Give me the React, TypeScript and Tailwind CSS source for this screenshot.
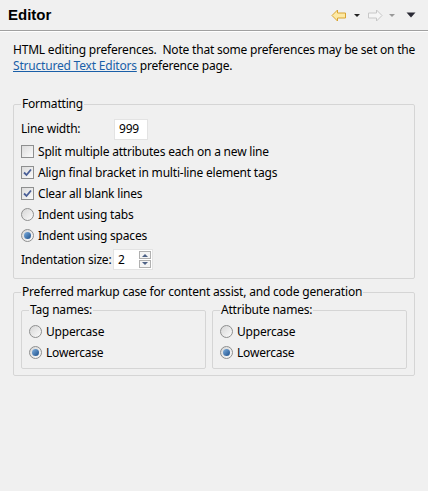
import React from 'react';

const font = { fontFamily: '"Noto Sans", "Liberation Sans", sans-serif' };

const Check = ({ checked }: { checked?: boolean }) => (
  <span className="relative flex h-[13px] w-[13px] shrink-0 items-center justify-center border border-[#8e8f8f] bg-gradient-to-br from-[#dcdcdc] to-[#fbfbfb]">
    {checked && (
      <svg width="9" height="9" viewBox="0 0 9 9">
        <path d="M1 4.5 L3.5 7 L8 1.5" fill="none" stroke="#4a5f97" strokeWidth="1.8" />
      </svg>
    )}
  </span>
);

const Radio = ({ checked }: { checked?: boolean }) => (
  <span className="flex h-[13px] w-[13px] shrink-0 items-center justify-center rounded-full border border-[#8e8f8f] bg-gradient-to-br from-[#d6d6d6] to-[#fbfbfb]">
    {checked && <span className="h-[7px] w-[7px] rounded-full bg-gradient-to-br from-[#7fb0e0] to-[#1b4f8a]" />}
  </span>
);

const Row = ({ children, label }: { children: React.ReactNode; label: string }) => (
  <div className="flex h-[21px] items-center gap-[4px] whitespace-nowrap">
    {children}
    <span>{label}</span>
  </div>
);

const Group = ({ legend, className, children }: { legend: string; className?: string; children: React.ReactNode }) => (
  <fieldset className={`rounded-[2px] border border-[#d5d5d5] ${className ?? ''}`}>
    <legend className="px-[1px] leading-[16px] whitespace-nowrap">{legend}</legend>
    {children}
  </fieldset>
);

export default function App() {
  return (
    <div className="h-[491px] w-[428px] bg-[#f0f0f0] text-[12px] tracking-[-0.2px] text-black" style={font}>
      {/* Title bar */}
      <div className="flex h-[31px] items-center justify-between border-b border-[#a0a0a0] pl-[8px] pr-[12px]">
        <span className="text-[15px] font-bold tracking-normal" style={{ fontFamily: '"Liberation Sans", Arial, sans-serif' }}>Editor</span>
        <div className="flex items-center">
          <svg width="16" height="13" viewBox="0 0 16 13">
            <path d="M1 6.5 L6.5 1 L6.5 4 L14.5 4 L14.5 9 L6.5 9 L6.5 12 Z" fill="#fde9a4" stroke="#d9a430" strokeWidth="1" />
          </svg>
          <svg width="8" height="5" viewBox="0 0 8 5" className="ml-[6px]">
            <path d="M1 1 L7 1 L4 4 Z" fill="#222" />
          </svg>
          <svg width="16" height="13" viewBox="0 0 16 13" className="ml-[6px]">
            <path d="M15 6.5 L9.5 1 L9.5 4 L1.5 4 L1.5 9 L9.5 9 L9.5 12 Z" fill="#f5f5f5" stroke="#c8c8c8" strokeWidth="1" />
          </svg>
          <svg width="8" height="5" viewBox="0 0 8 5" className="ml-[5px]">
            <path d="M1 1 L7 1 L4 4 Z" fill="#999" />
          </svg>
          <svg width="10" height="6" viewBox="0 0 10 6" className="ml-[10px]">
            <path d="M0.5 0.5 L9.5 0.5 L5 5.5 Z" fill="#2a2a35" />
          </svg>
        </div>
      </div>
      <div className="h-px bg-white" />

      <div className="px-[13px]">
        <p className="mt-[10px] leading-[16px] whitespace-nowrap">
          HTML editing preferences.&nbsp; Note that some preferences may be set on the
          <br />
          <span className="text-[#1a5fa8] underline">Structured Text Editors</span> preference page.
        </p>

        <Group legend="Formatting" className="mt-[22px] px-[7px] pt-[5px] pb-[7px]">
          <div className="flex h-[24px] items-center">
            <span className="w-[93px] shrink-0">Line width:</span>
            <span className="flex h-[21px] w-[34px] items-center border border-[#e3e3e3] bg-white pl-[4px]">999</span>
          </div>
          <Row label="Split multiple attributes each on a new line"><Check /></Row>
          <Row label="Align final bracket in multi-line element tags"><Check checked /></Row>
          <Row label="Clear all blank lines"><Check checked /></Row>
          <Row label="Indent using tabs"><Radio /></Row>
          <Row label="Indent using spaces"><Radio checked /></Row>
          <div className="mt-[2px] flex h-[23px] items-center whitespace-nowrap">
            <span className="w-[92px] shrink-0">Indentation size:</span>
            <span className="flex h-[21px] w-[40px] items-center justify-between border border-[#e3e3e3] bg-white pl-[4px] pr-[1px]">
              <span>2</span>
              <span className="flex flex-col gap-px">
                <span className="flex h-[8px] w-[12px] items-center justify-center border border-[#b0b0b0] bg-[#f4f4f4]">
                  <svg width="6" height="4" viewBox="0 0 6 4"><path d="M0 4 L3 1 L6 4 Z" fill="#4d6185" /></svg>
                </span>
                <span className="flex h-[8px] w-[12px] items-center justify-center border border-[#b0b0b0] bg-[#f4f4f4]">
                  <svg width="6" height="4" viewBox="0 0 6 4"><path d="M0 0 L3 3 L6 0 Z" fill="#4d6185" /></svg>
                </span>
              </span>
            </span>
          </div>
        </Group>

        <Group legend="Preferred markup case for content assist, and code generation" className="mt-[5px] px-[7px] pt-[2px] pb-[6px]">
          <div className="flex gap-[6px]">
            <Group legend="Tag names:" className="w-[185px] shrink-0 px-[7px] pt-[3px] pb-[5px]">
              <Row label="Uppercase"><Radio /></Row>
              <Row label="Lowercase"><Radio checked /></Row>
            </Group>
            <Group legend="Attribute names:" className="flex-1 px-[7px] pt-[3px] pb-[5px]">
              <Row label="Uppercase"><Radio /></Row>
              <Row label="Lowercase"><Radio checked /></Row>
            </Group>
          </div>
        </Group>
      </div>
    </div>
  );
}
